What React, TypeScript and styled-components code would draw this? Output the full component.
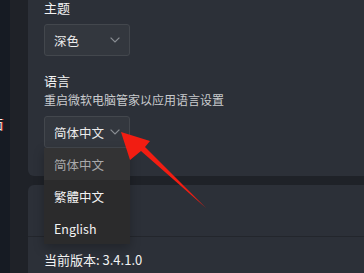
import styled, { createGlobalStyle } from "styled-components";

const GlobalStyle = createGlobalStyle`
  html, body {
    margin: 0;
    padding: 0;
    background: #202329;
    overflow: hidden;
  }
  body {
    font-family: "Noto Sans CJK SC", "Noto Sans", sans-serif;
    -webkit-font-smoothing: antialiased;
  }
`;

const Screen = styled.div`
  position: relative;
  display: flex;
  width: 364px;
  height: 273px;
  overflow: hidden;
`;

const Sidebar = styled.div`
  width: 10px;
  flex-shrink: 0;
  background: #161b23;
  overflow: hidden;
  padding-top: 116px;
`;

const SideText = styled.div`
  margin-left: -10px;
  font-size: 13px;
  line-height: 16px;
  color: #f2f2f2;
  text-shadow: 1px 0 0 #c0242a;
`;

const Main = styled.div`
  flex: 1;
  display: flex;
  flex-direction: column;
  gap: 9px;
  padding-left: 18px;
  margin-right: -10px;
  background: #1f2228;
`;

const Card = styled.section<{ $first?: boolean }>`
  background: #2c3038;
  border-radius: ${(p) => (p.$first ? "0 0 6px 6px" : "6px")};
  padding: 0 16px;
`;

const Heading = styled.div<{ $top?: number }>`
  margin-top: ${(p) => p.$top ?? 0}px;
  font-size: 13px;
  line-height: 16px;
  color: #f3f3f3;
`;

const Desc = styled.div`
  margin-top: 3px;
  font-size: 12px;
  line-height: 16px;
  color: #c9cbce;
`;

const SelectWrap = styled.div<{ $top: number; $bottom?: number }>`
  position: relative;
  width: 86px;
  margin-top: ${(p) => p.$top}px;
  margin-bottom: ${(p) => p.$bottom ?? 0}px;
`;

const SelectBox = styled.div`
  box-sizing: border-box;
  height: 32px;
  display: flex;
  align-items: center;
  justify-content: space-between;
  padding: 0 9px 0 9px;
  background: #33373e;
  border: 1px solid #43474d;
  border-radius: 3px;
  font-size: 12.5px;
  color: #ececec;
`;

const Menu = styled.ul`
  position: absolute;
  top: 100%;
  left: 0;
  width: 86px;
  margin: 0;
  padding: 0;
  list-style: none;
  background: #2b2b2c;
  box-shadow: 0 4px 10px rgba(0, 0, 0, 0.25);
  z-index: 2;
`;

const MenuItem = styled.li<{ $active?: boolean }>`
  height: 32px;
  display: flex;
  align-items: center;
  padding-left: 10px;
  font-size: 12.5px;
  color: ${(p) => (p.$active ? "#a9a9aa" : "#f2f2f2")};
  background: ${(p) => (p.$active ? "#333334" : "transparent")};
`;

const Row = styled.div<{ $h: number; $divider?: boolean }>`
  height: ${(p) => p.$h}px;
  display: flex;
  align-items: center;
  border-bottom: ${(p) => (p.$divider ? "1px solid #23262c" : "none")};
  margin: 0 -16px;
  padding: 0 16px;
`;

const Version = styled.div`
  font-size: 13px;
  color: #f3f3f3;
  padding-top: 0px;
`;

const Chevron = () => (
  <svg width="10" height="6" viewBox="0 0 10 6" fill="none">
    <polyline points="0.6,0.6 5,5 9.4,0.6" stroke="#8a8e94" strokeWidth="1.2" />
  </svg>
);

const Annotation = styled.svg`
  position: absolute;
  left: 0;
  top: 0;
  pointer-events: none;
  z-index: 5;
`;

const App = () => {
  return (
    <>
      <GlobalStyle />
      <Screen>
        <Sidebar>
          <SideText>面</SideText>
        </Sidebar>
        <Main>
          <Card $first>
            <Heading>主题</Heading>
            <SelectWrap $top={8}>
              <SelectBox>
                <span>深色</span>
                <Chevron />
              </SelectBox>
            </SelectWrap>
            <Heading $top={17}>语言</Heading>
            <Desc>重启微软电脑管家以应用语言设置</Desc>
            <SelectWrap $top={8} $bottom={28}>
              <SelectBox>
                <span>简体中文</span>
                <Chevron />
              </SelectBox>
              <Menu>
                <MenuItem $active>简体中文</MenuItem>
                <MenuItem>繁體中文</MenuItem>
                <MenuItem>English</MenuItem>
              </Menu>
            </SelectWrap>
          </Card>
          <Card>
            <Row $h={51} $divider />
            <Row $h={44}>
              <Version>当前版本: 3.4.1.0</Version>
            </Row>
          </Card>
        </Main>
        <Annotation width="364" height="273" viewBox="0 0 364 273">
          <polygon
            points="121,132 150,141 145,147 206,208 141,151 130,160"
            fill="#f21d12"
          />
        </Annotation>
      </Screen>
    </>
  );
};

export default App;
